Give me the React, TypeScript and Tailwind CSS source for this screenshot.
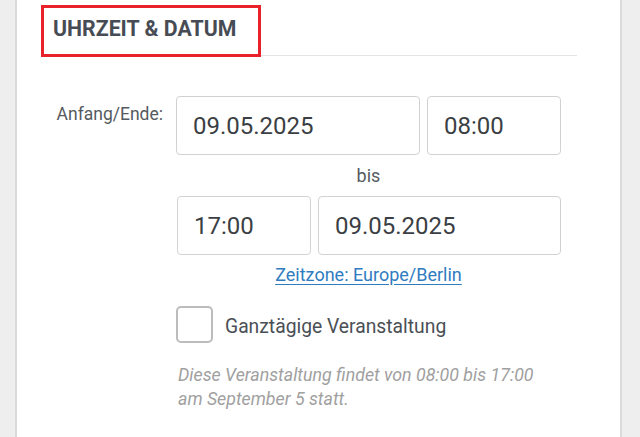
import { useState } from 'react'

function DateInput({ value, className }: { value: string; className: string }) {
  return (
    <div
      className={`flex h-[59px] items-center rounded-[4px] border border-[#d2d2d2] bg-white pl-[16px] text-[24px] text-[#3b3f44] ${className}`}
    >
      {value}
    </div>
  )
}

export default function App() {
  const [allDay, setAllDay] = useState(false)

  return (
    <div className="flex h-[437px] w-[640px] overflow-hidden bg-[#eeeeee] font-['Roboto',sans-serif]">
      <div className="ml-[15px] w-[607px] border-x-2 border-[#dadada] bg-white pl-[24px]">
        {/* section title */}
        <div className="relative w-[536px] border-b border-[#e4e4e4] pt-[17px] pb-[14px] pl-[12px]">
          <h2 className="text-[21.3px] font-bold leading-[24px] text-[#474c54]">UHRZEIT &amp; DATUM</h2>
          <div className="absolute left-0 top-[5px] h-[52px] w-[220px] border-[3px] border-[#e8212b]" />
        </div>

        <div className="mt-[40px] flex">
          <div className="w-[135px] pt-[6px] pr-[13px] text-right text-[17.5px] leading-[24px] text-[#555a60]">
            Anfang/Ende:
          </div>

          <div className="flex w-[385px] flex-col">
            <div className="flex gap-[7px]">
              <DateInput value="09.05.2025" className="w-[244px]" />
              <DateInput value="08:00" className="w-[134px]" />
            </div>

            <div className="mt-[9px] mb-[8px] text-center text-[18px] leading-[24px] text-[#555a60]">bis</div>

            <div className="flex gap-[7px] pl-[1px]">
              <DateInput value="17:00" className="w-[134px]" />
              <DateInput value="09.05.2025" className="w-[243px]" />
            </div>

            <div className="mt-[8px] text-center text-[18px] leading-[24px]">
              <a href="#" className="text-[#2f7cc0] underline underline-offset-[3px]">
                Zeitzone: Europe/Berlin
              </a>
            </div>

            <label className="mt-[19px] flex cursor-pointer items-start gap-[12px]">
              <button
                type="button"
                onClick={() => setAllDay(!allDay)}
                className="h-[37px] w-[37px] shrink-0 rounded-[5px] border-2 border-[#bcbcbc] bg-white"
              />
              <span className="mt-[9px] text-[19.3px] leading-[24px] text-[#4a4f55]">Ganztägige Veranstaltung</span>
            </label>

            <p className="mt-[20px] w-[370px] pl-[2px] text-[17.8px] italic leading-[24px] text-[#a0a0a0]">
              Diese Veranstaltung findet von 08:00 bis 17:00 am September 5 statt.
            </p>
          </div>
        </div>
      </div>
    </div>
  )
}
